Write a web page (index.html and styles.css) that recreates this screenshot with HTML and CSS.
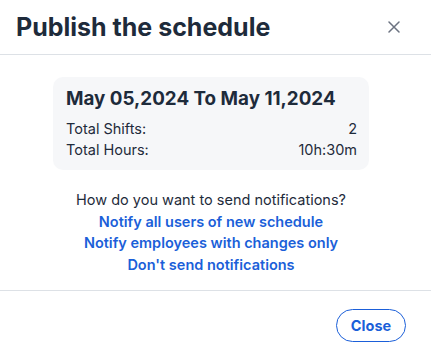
FILE: index.html
```html
<!DOCTYPE html>
<html lang="en">
  <head>
    <meta charset="UTF-8" />
    <meta name="viewport" content="width=device-width, initial-scale=1.0" />
    <title>Publish the schedule</title>
    <link rel="stylesheet" href="styles.css">
  </head>
  <body>
    <div class="modal">
      <div class="modal-header">
        <h2>Publish the schedule</h2>
        <button class="close-x" aria-label="Close">
          <svg width="12" height="12" viewBox="0 0 12 12">
            <path d="M1 1 L11 11 M11 1 L1 11" stroke="#6b7280" stroke-width="1.5" stroke-linecap="round" />
          </svg>
        </button>
      </div>

      <div class="modal-body">
        <div class="summary">
          <h3>May 05,2024 To May 11,2024</h3>
          <div class="row"><span>Total Shifts:</span><span>2</span></div>
          <div class="row"><span>Total Hours:</span><span>10h:30m</span></div>
        </div>

        <p class="question">How do you want to send notifications?</p>
        <a href="#" class="option">Notify all users of new schedule</a>
        <a href="#" class="option">Notify employees with changes only</a>
        <a href="#" class="option">Don't send notifications</a>
      </div>

      <div class="modal-footer">
        <button class="btn-close">Close</button>
      </div>
    </div>
  </body>
</html>
```

FILE: styles.css
```css
:root {
  --text-color: #1e2b3b;
  --link-color: #1b5fd9;
  --border-color: #dde1e6;
  --card-bg: #f6f7f9;
}

body {
  margin: 0;
  background: #ffffff;
  color: var(--text-color);
  font-family: Inter, "Noto Sans", sans-serif;
}

.modal {
  width: 431px;
}

.modal-header {
  display: flex;
  align-items: center;
  justify-content: space-between;
  height: 55px;
  padding: 0 31px 0 16px;
  border-bottom: 1px solid var(--border-color);
  box-sizing: border-box;
}

.modal-header h2 {
  margin: 0;
  font-size: 25px;
  font-weight: 700;
}

.close-x {
  border: none;
  background: none;
  padding: 0;
  display: flex;
  cursor: pointer;
}

.modal-body {
  display: flex;
  flex-direction: column;
  align-items: center;
  padding: 22px 9px 15px 0;
  border-bottom: 1px solid var(--border-color);
}

.summary {
  width: 316px;
  box-sizing: border-box;
  background: var(--card-bg);
  border-radius: 10px;
  padding: 10px 12px 10px 13px;
  margin-bottom: 19px;
}

.summary h3 {
  margin: 0 0 7px;
  font-size: 18.8px;
  line-height: 24px;
  font-weight: 700;
}

.row {
  display: flex;
  justify-content: space-between;
  font-size: 14.5px;
  line-height: 21px;
}

.question {
  margin: 0;
  font-size: 14.5px;
  line-height: 21.5px;
}

.option {
  color: var(--link-color);
  font-size: 14.5px;
  font-weight: 600;
  line-height: 21.5px;
  text-decoration: none;
}

.modal-footer {
  display: flex;
  justify-content: flex-end;
  padding: 18px 25px;
}

.btn-close {
  background: #ffffff;
  border: 1px solid var(--link-color);
  color: var(--link-color);
  border-radius: 17px;
  font-family: Inter, sans-serif;
  font-size: 14.5px;
  font-weight: 700;
  width: 70px;
  height: 33px;
  padding: 0;
  cursor: pointer;
}
```
